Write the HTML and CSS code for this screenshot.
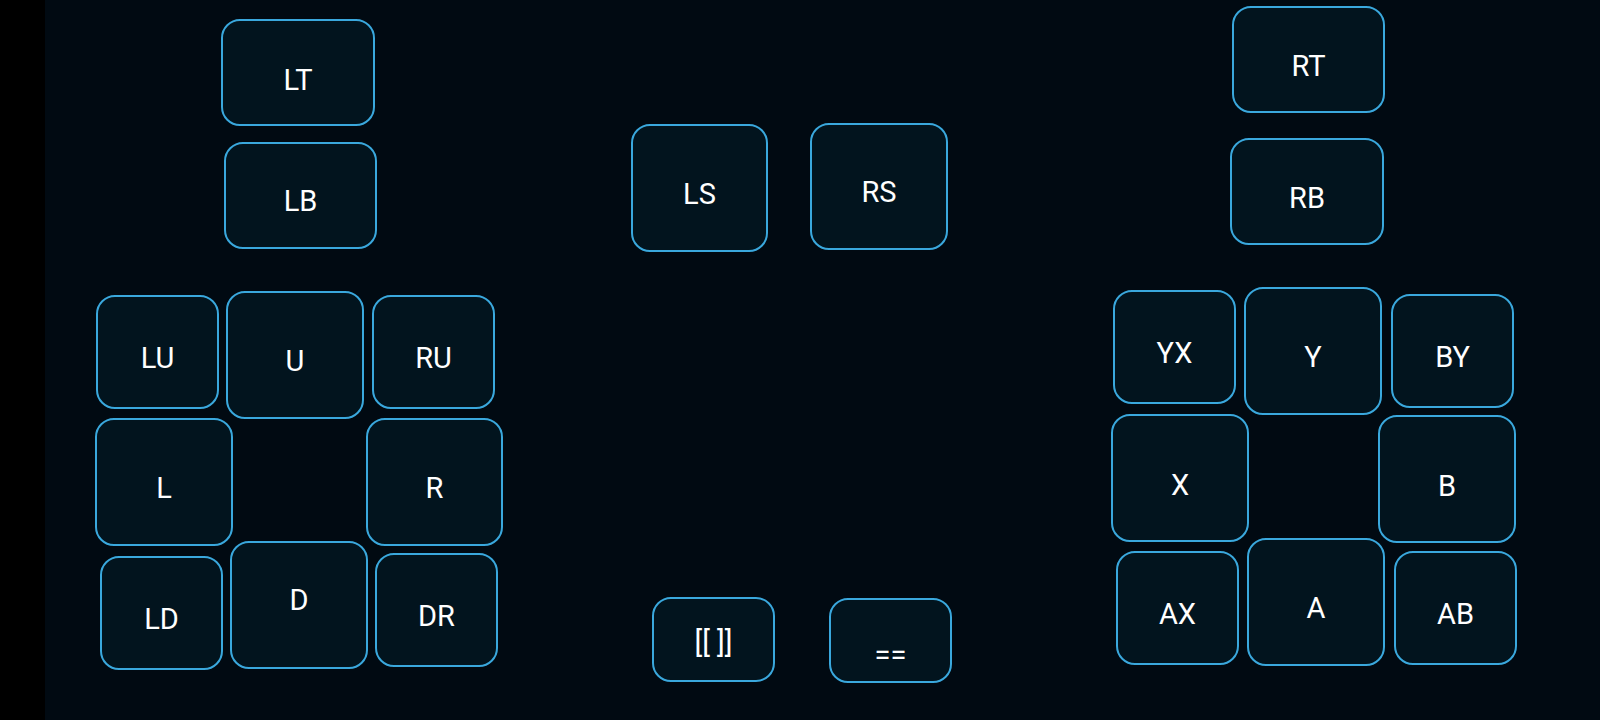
FILE: index.html
```html
<!DOCTYPE html>
<html lang="en">
<head>
<meta charset="utf-8">
<title>Controller layout</title>
<link rel="stylesheet" href="styles.css">
</head>
<body>
<div class="screen">
  <div class="bezel"></div>
  <main class="pad">
    <div class="key b-lt">LT</div>
    <div class="key b-lb">LB</div>
    <div class="key b-ls">LS</div>
    <div class="key b-rs">RS</div>
    <div class="key b-rt">RT</div>
    <div class="key b-rb">RB</div>

    <div class="key b-lu">LU</div>
    <div class="key b-u">U</div>
    <div class="key b-ru">RU</div>
    <div class="key b-l">L</div>
    <div class="key b-r">R</div>
    <div class="key b-ld">LD</div>
    <div class="key b-d">D</div>
    <div class="key b-dr">DR</div>

    <div class="key b-yx">YX</div>
    <div class="key b-y">Y</div>
    <div class="key b-by">BY</div>
    <div class="key b-x">X</div>
    <div class="key b-b">B</div>
    <div class="key b-ax">AX</div>
    <div class="key b-a">A</div>
    <div class="key b-ab">AB</div>

    <div class="key b-view">[[ ]]</div>
    <div class="key b-menu">==</div>
  </main>
</div>
</body>
</html>
```

FILE: styles.css
```css
html, body {
  margin: 0;
  padding: 0;
  width: 1600px;
  height: 720px;
  overflow: hidden;
  background: #000;
}

.screen {
  display: flex;
  width: 1600px;
  height: 720px;
}

.bezel {
  width: 45px;
  flex: none;
  background: #000;
}

.pad {
  position: relative;
  flex: 1;
  background: #010a12;
  font-family: Roboto, "Noto Sans", sans-serif;
}

.key {
  position: absolute;
  box-sizing: border-box;
  display: flex;
  align-items: center;
  justify-content: center;
  padding-top: 12px;
  border: 2px solid #3aa8dd;
  border-radius: 19px;
  background: #02141e;
  color: #ffffff;
  font-size: 29px;
  line-height: 1;
  white-space: pre;
}

/* shoulder / stick buttons */
.b-lt { left: 176px; top: 19px; width: 154px; height: 107px; padding-top: 15px; }
.b-lb { left: 179px; top: 142px; width: 153px; height: 107px; }
.b-ls { left: 586px; top: 124px; width: 137px; height: 128px; padding-top: 13px; }
.b-rs { left: 765px; top: 123px; width: 138px; height: 127px; }
.b-rt { left: 1187px; top: 6px; width: 153px; height: 107px; padding-top: 13px; }
.b-rb { left: 1185px; top: 138px; width: 154px; height: 107px; padding-top: 13px; }

/* d-pad */
.b-lu { left: 51px; top: 295px; width: 123px; height: 114px; }
.b-u  { left: 181px; top: 291px; width: 138px; height: 128px; }
.b-ru { left: 327px; top: 295px; width: 123px; height: 114px; }
.b-l  { left: 50px; top: 418px; width: 138px; height: 128px; }
.b-r  { left: 321px; top: 418px; width: 137px; height: 128px; }
.b-ld { left: 55px; top: 556px; width: 123px; height: 114px; }
.b-d  { left: 185px; top: 541px; width: 138px; height: 128px; padding-top: 0; padding-bottom: 9px; }
.b-dr { left: 330px; top: 553px; width: 123px; height: 114px; padding-top: 13px; }

/* face buttons */
.b-yx { left: 1068px; top: 290px; width: 123px; height: 114px; }
.b-y  { left: 1199px; top: 287px; width: 138px; height: 128px; }
.b-by { left: 1346px; top: 294px; width: 123px; height: 114px; padding-top: 13px; }
.b-x  { left: 1066px; top: 414px; width: 138px; height: 128px; padding-top: 14px; }
.b-b  { left: 1333px; top: 415px; width: 138px; height: 128px; padding-top: 14px; }
.b-ax { left: 1071px; top: 551px; width: 123px; height: 114px; padding-top: 13px; }
.b-a  { left: 1202px; top: 538px; width: 138px; height: 128px; padding-top: 13px; }
.b-ab { left: 1349px; top: 551px; width: 123px; height: 114px; padding-top: 13px; }

/* view / menu */
.b-view { left: 607px; top: 597px; width: 123px; height: 85px; padding-top: 6px; }
.b-menu { left: 784px; top: 598px; width: 123px; height: 85px; padding-top: 30px; }
```
